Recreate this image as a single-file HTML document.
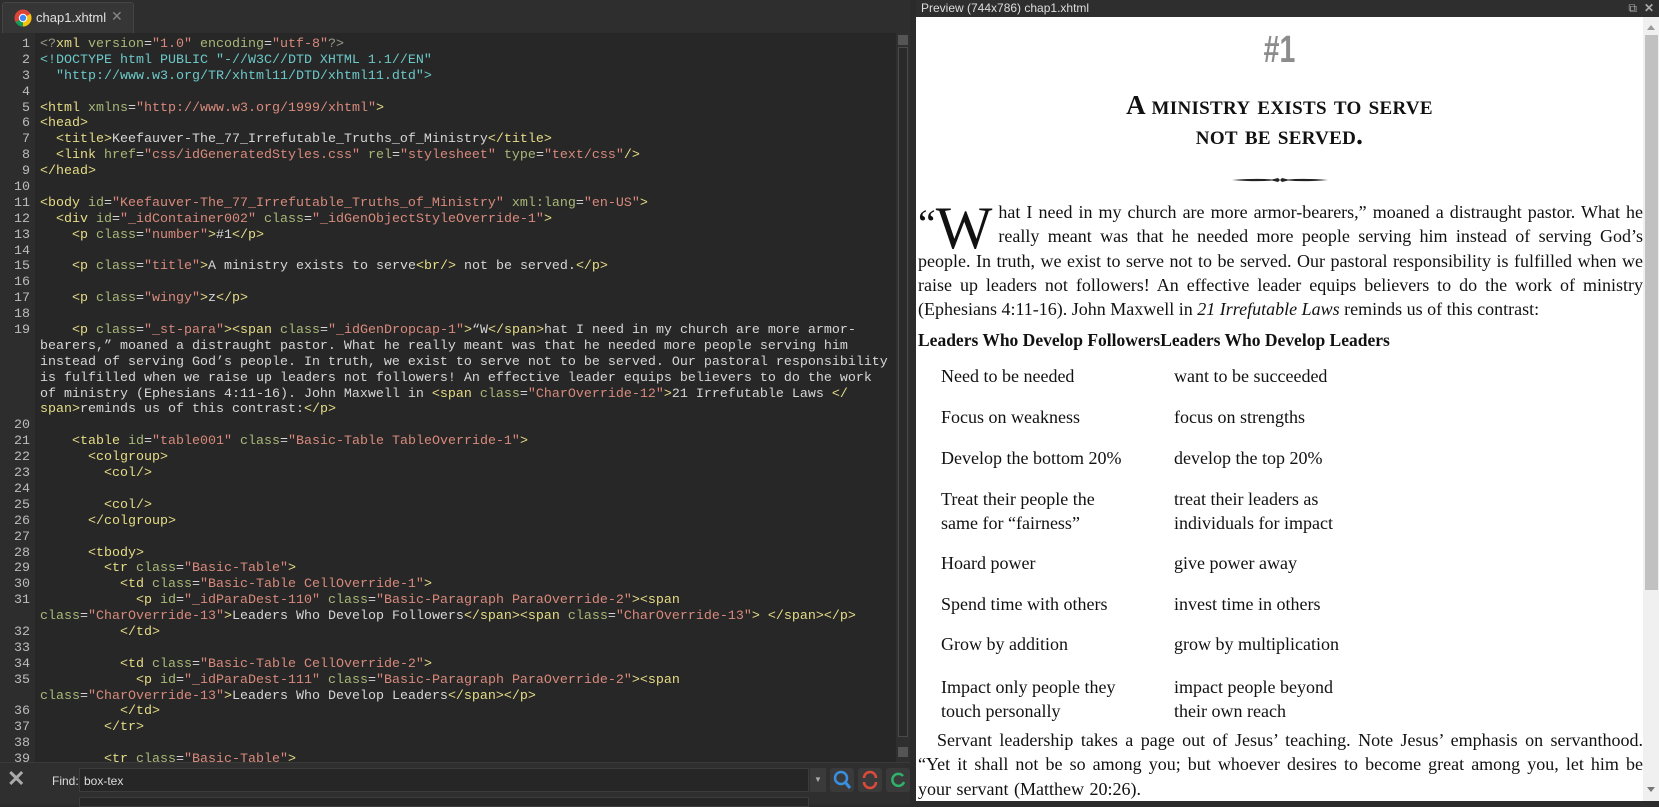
<!DOCTYPE html>
<html><head><meta charset="utf-8"><style>
*{margin:0;padding:0;box-sizing:border-box}
body{width:1659px;height:804px;background:#2b2b2b;position:relative;overflow:hidden;font-family:"Liberation Sans",sans-serif}
.tabbar{position:absolute;left:0;top:0;width:910px;height:33px;background:#2e2e2e}
.tab{position:absolute;left:2px;top:2px;width:132px;height:31px;background:#363636;border:1px solid #444;border-bottom:none;border-radius:3px 3px 0 0;color:#e0e0e0;font-size:13px}
.editor{position:absolute;left:0;top:33px;width:896px;height:729px;background:#272727;overflow:hidden}
.gutter{position:absolute;left:0;top:0;width:35px;height:100%;background:#2d2d2d}
.code{position:absolute;left:0;top:4px;font-family:"Liberation Mono",monospace;font-size:13.33px;line-height:15.9px;color:#d6d6d6}
.r{height:15.9px;position:relative;white-space:pre}
.n{display:inline-block;width:30px;text-align:right;color:#bcbcbc;margin-right:10px}
.hl{background:#3d3d3d;position:absolute;left:38px;top:0;width:806px;height:16px;z-index:-1}
.t{color:#e6dc86}.a{color:#a8b878}.s{color:#d98a7c}.d{color:#6cc8c8}.g{color:#9a9a8a}
.vs{position:absolute;left:896px;top:33px;width:14px;height:729px;background:#2f2f2f}
.split{position:absolute;left:910px;top:0;width:6px;height:804px;background:#2b2b2b}
.find{position:absolute;left:0;top:762px;width:910px;height:42px;background:#2f2f2f;border-top:1px solid #3a3a3a}
.phead{position:absolute;left:916px;top:0;width:743px;height:17px;background:#2e2e2e;color:#ddd;font-size:12px;line-height:16px;padding-left:5px}
.prev{position:absolute;left:916px;top:17px;width:727px;height:784px;background:#fff;overflow:hidden;font-family:"Liberation Serif",serif;color:#111}
.psb{position:absolute;left:1643px;top:17px;width:16px;height:784px;background:#f0f0f0}
.p{position:absolute;font-size:18px;line-height:24.3px}
.sc{font-variant:small-caps;font-weight:bold;text-align:center;font-size:27px;left:0;width:727px;letter-spacing:0.3px}
</style></head><body>
<div class="tabbar"><div class="tab">
<svg width="18" height="18" style="position:absolute;left:11px;top:6px" viewBox="0 0 18 18"><circle cx="9" cy="9" r="8.5" fill="#db4437"/><path d="M9 9 L1.6 13.2 A8.5 8.5 0 0 0 9 17.5 Z" fill="#0f9d58"/><path d="M9 9 L9 17.5 A8.5 8.5 0 0 0 16.4 4.8 Z" fill="#f4c20d"/><circle cx="9" cy="9" r="4.2" fill="#fff"/><circle cx="9" cy="9" r="3.2" fill="#4285f4"/></svg>
<span style="position:absolute;left:33px;top:7px">chap1.xhtml</span><span style="position:absolute;left:108px;top:5px;color:#888;font-size:14px">✕</span></div></div>
<div class="editor"><div class="gutter"></div>
<div class="code">
<div class="r"><div class="hl"></div><span class="n">1</span><span class="g">&lt;?</span><span class="t">xml</span> <span class="a">version</span>=<span class="s">"1.0"</span> <span class="a">encoding</span>=<span class="s">"utf-8"</span><span class="g">?&gt;</span></div>
<div class="r"><span class="n">2</span><span class="d">&lt;!DOCTYPE html PUBLIC "-//W3C//DTD XHTML 1.1//EN"</span></div>
<div class="r"><span class="n">3</span><span class="d">  "http://www.w3.org/TR/xhtml11/DTD/xhtml11.dtd"&gt;</span></div>
<div class="r"><span class="n">4</span></div>
<div class="r"><span class="n">5</span><span class="t">&lt;html</span> <span class="a">xmlns</span>=<span class="s">"http://www.w3.org/1999/xhtml"</span><span class="t">&gt;</span></div>
<div class="r"><span class="n">6</span><span class="t">&lt;head&gt;</span></div>
<div class="r"><span class="n">7</span>  <span class="t">&lt;title&gt;</span>Keefauver-The_77_Irrefutable_Truths_of_Ministry<span class="t">&lt;/title&gt;</span></div>
<div class="r"><span class="n">8</span>  <span class="t">&lt;link</span> <span class="a">href</span>=<span class="s">"css/idGeneratedStyles.css"</span> <span class="a">rel</span>=<span class="s">"stylesheet"</span> <span class="a">type</span>=<span class="s">"text/css"</span><span class="t">/&gt;</span></div>
<div class="r"><span class="n">9</span><span class="t">&lt;/head&gt;</span></div>
<div class="r"><span class="n">10</span></div>
<div class="r"><span class="n">11</span><span class="t">&lt;body</span> <span class="a">id</span>=<span class="s">"Keefauver-The_77_Irrefutable_Truths_of_Ministry"</span> <span class="a">xml:lang</span>=<span class="s">"en-US"</span><span class="t">&gt;</span></div>
<div class="r"><span class="n">12</span>  <span class="t">&lt;div</span> <span class="a">id</span>=<span class="s">"_idContainer002"</span> <span class="a">class</span>=<span class="s">"_idGenObjectStyleOverride-1"</span><span class="t">&gt;</span></div>
<div class="r"><span class="n">13</span>    <span class="t">&lt;p</span> <span class="a">class</span>=<span class="s">"number"</span><span class="t">&gt;</span>#1<span class="t">&lt;/p&gt;</span></div>
<div class="r"><span class="n">14</span></div>
<div class="r"><span class="n">15</span>    <span class="t">&lt;p</span> <span class="a">class</span>=<span class="s">"title"</span><span class="t">&gt;</span>A ministry exists to serve<span class="t">&lt;br/&gt;</span> not be served.<span class="t">&lt;/p&gt;</span></div>
<div class="r"><span class="n">16</span></div>
<div class="r"><span class="n">17</span>    <span class="t">&lt;p</span> <span class="a">class</span>=<span class="s">"wingy"</span><span class="t">&gt;</span>z<span class="t">&lt;/p&gt;</span></div>
<div class="r"><span class="n">18</span></div>
<div class="r"><span class="n">19</span>    <span class="t">&lt;p</span> <span class="a">class</span>=<span class="s">"_st-para"</span><span class="t">&gt;&lt;span</span> <span class="a">class</span>=<span class="s">"_idGenDropcap-1"</span><span class="t">&gt;</span>“W<span class="t">&lt;/span&gt;</span>hat I need in my church are more armor-</div>
<div class="r"><span class="n"></span>bearers,” moaned a distraught pastor. What he really meant was that he needed more people serving him</div>
<div class="r"><span class="n"></span>instead of serving God’s people. In truth, we exist to serve not to be served. Our pastoral responsibility</div>
<div class="r"><span class="n"></span>is fulfilled when we raise up leaders not followers! An effective leader equips believers to do the work</div>
<div class="r"><span class="n"></span>of ministry (Ephesians 4:11-16). John Maxwell in <span class="t">&lt;span</span> <span class="a">class</span>=<span class="s">"CharOverride-12"</span><span class="t">&gt;</span>21 Irrefutable Laws <span class="t">&lt;/</span></div>
<div class="r"><span class="n"></span><span class="t">span&gt;</span>reminds us of this contrast:<span class="t">&lt;/p&gt;</span></div>
<div class="r"><span class="n">20</span></div>
<div class="r"><span class="n">21</span>    <span class="t">&lt;table</span> <span class="a">id</span>=<span class="s">"table001"</span> <span class="a">class</span>=<span class="s">"Basic-Table TableOverride-1"</span><span class="t">&gt;</span></div>
<div class="r"><span class="n">22</span>      <span class="t">&lt;colgroup&gt;</span></div>
<div class="r"><span class="n">23</span>        <span class="t">&lt;col/&gt;</span></div>
<div class="r"><span class="n">24</span></div>
<div class="r"><span class="n">25</span>        <span class="t">&lt;col/&gt;</span></div>
<div class="r"><span class="n">26</span>      <span class="t">&lt;/colgroup&gt;</span></div>
<div class="r"><span class="n">27</span></div>
<div class="r"><span class="n">28</span>      <span class="t">&lt;tbody&gt;</span></div>
<div class="r"><span class="n">29</span>        <span class="t">&lt;tr</span> <span class="a">class</span>=<span class="s">"Basic-Table"</span><span class="t">&gt;</span></div>
<div class="r"><span class="n">30</span>          <span class="t">&lt;td</span> <span class="a">class</span>=<span class="s">"Basic-Table CellOverride-1"</span><span class="t">&gt;</span></div>
<div class="r"><span class="n">31</span>            <span class="t">&lt;p</span> <span class="a">id</span>=<span class="s">"_idParaDest-110"</span> <span class="a">class</span>=<span class="s">"Basic-Paragraph ParaOverride-2"</span><span class="t">&gt;&lt;span</span></div>
<div class="r"><span class="n"></span><span class="a">class</span>=<span class="s">"CharOverride-13"</span><span class="t">&gt;</span>Leaders Who Develop Followers<span class="t">&lt;/span&gt;&lt;span</span> <span class="a">class</span>=<span class="s">"CharOverride-13"</span><span class="t">&gt;</span> <span class="t">&lt;/span&gt;&lt;/p&gt;</span></div>
<div class="r"><span class="n">32</span>          <span class="t">&lt;/td&gt;</span></div>
<div class="r"><span class="n">33</span></div>
<div class="r"><span class="n">34</span>          <span class="t">&lt;td</span> <span class="a">class</span>=<span class="s">"Basic-Table CellOverride-2"</span><span class="t">&gt;</span></div>
<div class="r"><span class="n">35</span>            <span class="t">&lt;p</span> <span class="a">id</span>=<span class="s">"_idParaDest-111"</span> <span class="a">class</span>=<span class="s">"Basic-Paragraph ParaOverride-2"</span><span class="t">&gt;&lt;span</span></div>
<div class="r"><span class="n"></span><span class="a">class</span>=<span class="s">"CharOverride-13"</span><span class="t">&gt;</span>Leaders Who Develop Leaders<span class="t">&lt;/span&gt;&lt;/p&gt;</span></div>
<div class="r"><span class="n">36</span>          <span class="t">&lt;/td&gt;</span></div>
<div class="r"><span class="n">37</span>        <span class="t">&lt;/tr&gt;</span></div>
<div class="r"><span class="n">38</span></div>
<div class="r"><span class="n">39</span>        <span class="t">&lt;tr</span> <span class="a">class</span>=<span class="s">"Basic-Table"</span><span class="t">&gt;</span></div>
</div></div>
<div class="vs"><div style="position:absolute;left:2px;top:2px;width:10px;height:10px;background:#555"></div><div style="position:absolute;left:2px;top:14px;width:10px;height:690px;border:1px solid #4a4a4a;background:#2a2a2a"></div><div style="position:absolute;left:2px;top:714px;width:10px;height:10px;background:#555"></div></div>
<div class="split"></div>
<div class="find">
<span style="position:absolute;left:7px;top:3px;color:#aaa;font-size:22px;font-weight:bold">✕</span>
<span style="position:absolute;left:52px;top:11px;color:#ddd;font-size:12px">Find:</span>
<div style="position:absolute;left:79px;top:5px;width:730px;height:24px;background:#262626;border:1px solid #3c3c3c"><span style="position:absolute;left:4px;top:5px;color:#ddd;font-size:12px">box-tex</span></div>
<div style="position:absolute;left:810px;top:5px;width:16px;height:24px;background:#3a3a3a;color:#aaa;font-size:8px;text-align:center;line-height:24px">▼</div>
<div style="position:absolute;left:830px;top:5px;width:24px;height:24px;background:#3a3a3a;border-radius:3px"><svg width="24" height="24"><circle cx="11" cy="10" r="6" fill="none" stroke="#3b8fe0" stroke-width="2.5"/><path d="M15 14 L20 20" stroke="#3b8fe0" stroke-width="3"/></svg></div>
<div style="position:absolute;left:858px;top:5px;width:24px;height:24px;background:#3a3a3a;border-radius:3px"><svg width="24" height="24"><path d="M6 10 A6 6 0 0 1 18 10 M18 14 A6 6 0 0 1 6 14" fill="none" stroke="#e04a3a" stroke-width="2.5"/></svg></div>
<div style="position:absolute;left:886px;top:5px;width:24px;height:24px;background:#3a3a3a;border-radius:3px"><svg width="24" height="24"><path d="M17 8 A6 6 0 1 0 18 14" fill="none" stroke="#2fb36a" stroke-width="2.5"/></svg></div>
<div style="position:absolute;left:79px;top:34px;width:730px;height:10px;background:#262626;border:1px solid #3c3c3c"></div>
</div>
<div class="phead">Preview (744x786) chap1.xhtml<span style="position:absolute;right:22px;top:0;color:#aaa">⧉</span><span style="position:absolute;right:5px;top:0;color:#aaa;font-weight:bold">✕</span></div>
<div class="prev">
<div style="position:absolute;left:0;width:727px;top:12px;text-align:center;font-family:'Liberation Sans',sans-serif;font-weight:bold;font-size:38px;color:#8c8c8c;transform:scaleX(0.75)">#1</div>
<div class="p sc" style="top:73px;line-height:30px">A ministry exists to serve<br>not be served.</div>
<svg style="position:absolute;left:316px;top:159px" width="96" height="8"><path d="M0 4 Q24 2 40 3.5 L46 2 L48 4 L50 2 L56 3.5 Q72 2 96 4 Q72 6 56 4.5 L50 6 L48 4 L46 6 L40 4.5 Q24 6 0 4Z" fill="#222"/></svg>
<div class="p" style="left:2px;top:183px;width:725px;text-align:justify;text-align-last:left">
<div style="float:left;font-size:60px;line-height:44px;margin:6px 6px 0 0;height:42px"><span style="font-size:40px;vertical-align:top;line-height:36px">“</span>W</div>
hat I need in my church are more armor-bearers,” moaned a distraught pastor. What he really meant was that he needed more people serving him instead of serving God’s people. In truth, we exist to serve not to be served. Our pastoral responsibility is fulfilled when we raise up leaders not followers! An effective leader equips believers to do the work of ministry (Ephesians 4:11-16). John Maxwell in <i>21 Irrefutable Laws</i> reminds us of this contrast:</div>
<div class="p" style="left:2px;top:311px;font-weight:bold;font-size:17.5px">Leaders Who Develop FollowersLeaders Who Develop Leaders</div>
<div class="p" style="left:25px;top:347px">Need to be needed</div><div class="p" style="left:258px;top:347px">want to be succeeded</div>
<div class="p" style="left:25px;top:388px">Focus on weakness</div><div class="p" style="left:258px;top:388px">focus on strengths</div>
<div class="p" style="left:25px;top:429px">Develop the bottom 20%</div><div class="p" style="left:258px;top:429px">develop the top 20%</div>
<div class="p" style="left:25px;top:470px">Treat their people the<br>same for “fairness”</div><div class="p" style="left:258px;top:470px">treat their leaders as<br>individuals for impact</div>
<div class="p" style="left:25px;top:534px">Hoard power</div><div class="p" style="left:258px;top:534px">give power away</div>
<div class="p" style="left:25px;top:575px">Spend time with others</div><div class="p" style="left:258px;top:575px">invest time in others</div>
<div class="p" style="left:25px;top:615px">Grow by addition</div><div class="p" style="left:258px;top:615px">grow by multiplication</div>
<div class="p" style="left:25px;top:658px">Impact only people they<br>touch personally</div><div class="p" style="left:258px;top:658px">impact people beyond<br>their own reach</div>
<div class="p" style="left:2px;top:711px;width:725px;text-align:justify;text-align-last:left;text-indent:19px;word-spacing:1px">Servant leadership takes a page out of Jesus’ teaching. Note Jesus’ emphasis on servanthood. “Yet it shall not be so among you; but whoever desires to become great among you, let him be your servant (Matthew 20:26).</div>
</div>
<div class="psb"><div style="position:absolute;left:4px;top:8px;width:0;height:0;border-left:4px solid transparent;border-right:4px solid transparent;border-bottom:5px solid #999"></div><div style="position:absolute;left:2px;top:18px;width:13px;height:555px;background:#c1c1c1"></div><div style="position:absolute;left:4px;top:770px;width:0;height:0;border-left:4px solid transparent;border-right:4px solid transparent;border-top:5px solid #777"></div></div>
</body></html>
